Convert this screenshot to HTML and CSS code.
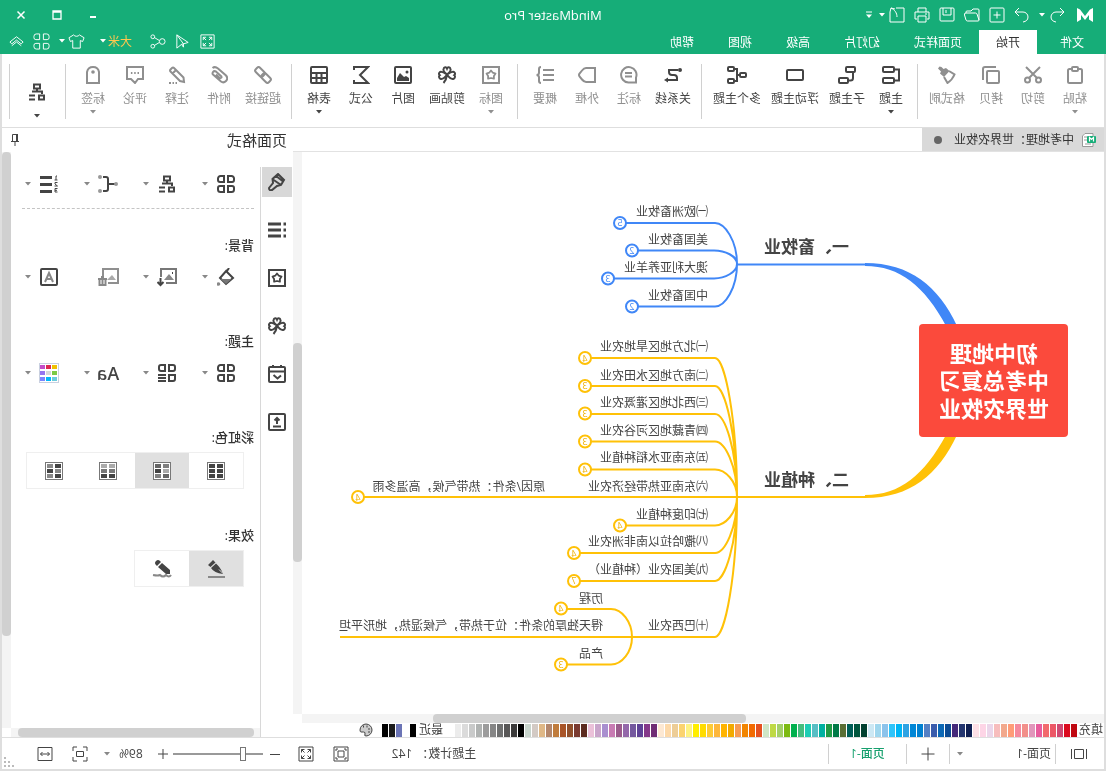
FILE: index.html
```html
<!DOCTYPE html>
<html lang="zh-CN">
<head>
<meta charset="utf-8">
<title>MindMaster Pro</title>
<link rel="stylesheet" href="styles.css">
</head>
<body>
<svg class="defs" aria-hidden="true">
  <symbol id="caret" viewBox="0 0 6 4"><path d="M0 0h6L3 3.500z" fill="currentColor" stroke="none"/></symbol>
  <symbol id="four" viewBox="0 0 18 18"><path d="M3.500 1H7v6H3a2 2 0 0 1-2-2V3.500A2.500 2.500 0 0 1 3.500 1zM11 1h3.500A2.500 2.500 0 0 1 17 3.500V5a2 2 0 0 1-2 2h-4zM3 11h4v6H3.500A2.500 2.500 0 0 1 1 14.500V13a2 2 0 0 1 2-2zM11 11h4a2 2 0 0 1 2 2v1.500a2.500 2.500 0 0 1-2.500 2.500H11z"/></symbol>
  <symbol id="layout" viewBox="0 0 18 18"><path d="M6 1.500h6v4H6zM9 5.500v3M4 11V8.500h10M2 12.500h5v4H2zM11 12.500h6M11 16.500h6"/></symbol>
  <symbol id="clover" viewBox="0 0 18 18"><path d="M9 8.500C6 6 5 4.500 5.500 3 6 1 8.300.800 9 2.500 9.700.800 12 1 12.500 3 13 4.500 12 6 9 8.500C12 6.500 14 5 16 6c1.500 1 1.200 2.600.300 3.200 1 .8 1 2.800-.6 3.600C13.500 13.500 11 11.500 9 8.500 7 11.500 4.500 13.500 2.300 12.800.700 12 .7 10 1.700 9.200.800 8.600.5 7 2 6c2-1 4 .5 7 2.500zM9 9c.5 3.500 1.500 6 3.500 8"/></symbol>
  <symbol id="star" viewBox="0 0 18 18"><path d="M1 1h16v16H1z"/><path d="M9 4.500l1.800 2.200 2.700.9-1.600 2.300v2.800L9 12l-2.900.7V9.900L4.500 7.600l2.700-.9z" stroke-width="1.800" stroke-linejoin="round"/></symbol>
  <symbol id="expand" viewBox="0 0 18 18"><path d="M2 2h14v14H2zM4.500 7.500v-3h3M4.500 4.500l3 3M10.500 4.500h3v3M13.500 4.500l-3 3M4.500 10.500v3h3M4.500 13.500l3-3M13.500 10.500v3h-3M13.500 13.500l-3-3"/></symbol>
</svg>

<div class="app">
  <header class="titlebar">
    <div class="quick">
      <svg class="logo" viewBox="0 0 18 14"><path d="M1 0l3 1.500 5 6.500 5-6.500L17 0v14l-4-2.500V7l-4 5-4-5v4.500L1 14z" fill="#fff"/></svg>
      <span class="split first"><button class="tb" aria-label="撤销"><svg viewBox="0 0 18 18"><path d="M6 2L2 6l4 4M2 6h8a5 5 0 0 1 5 5c0 3-2 4.500-5 5"/></svg></button><button class="cb" aria-label="撤销列表"><svg><use href="#caret"/></svg></button></span>
      <button class="tb" aria-label="恢复"><svg viewBox="0 0 18 18"><path d="M12 2l4 4-4 4M16 6H8a5 5 0 0 0-5 5c0 3 2 4.500 5 5"/></svg></button>
      <button class="tb" aria-label="新建"><svg viewBox="0 0 18 18"><rect x="2" y="2" width="14" height="14" rx="1"/><path d="M9 5.500v7M5.500 9h7"/></svg></button>
      <button class="tb" aria-label="打开"><svg viewBox="0 0 18 18"><path d="M2 14V4q0-1 1-1h5l2 2h4q1 0 1 1v1M2 14L4 8q.5-1 1.500-1H15q2 0 1.500 2L15 14q-.5 1-1.500 1H3q-1 0-1-1z"/></svg></button>
      <button class="tb" aria-label="保存"><svg viewBox="0 0 18 18"><rect x="2" y="2" width="14" height="13" rx="1"/><path d="M5 2v7h8V2M10 4v3"/></svg></button>
      <button class="tb" aria-label="打印"><svg viewBox="0 0 18 18"><path d="M5 6V2h8v4M4 13H2V6h14v7h-2M5 10h8v6H5zM4 8h2"/></svg></button>
      <span class="split"><button class="tb" aria-label="导出"><svg viewBox="0 0 18 18"><path d="M10 2H2v14h14V6M15 2l-4 1M15 2l1 4M15 2c-4 2-6 5-6 9"/></svg></button><button class="cb" aria-label="导出列表"><svg><use href="#caret"/></svg></button></span>
      <button class="more" aria-label="自定义"><svg viewBox="0 0 6 8"><path d="M0 1h6" /><path d="M0 3.500h6L3 7z" fill="#fff" stroke="none"/></svg></button>
    </div>
    <h1 class="title">MindMaster Pro</h1>
    <div class="win">
      <button aria-label="最小化"><svg viewBox="0 0 10 10"><path d="M2 7h6"/></svg></button>
      <button aria-label="最大化"><svg viewBox="0 0 10 10"><path d="M1 1h8v8H1zM1 2h8" stroke-width="1.300"/></svg></button>
      <button aria-label="关闭"><svg viewBox="0 0 10 10"><path d="M1.500 1.500l7 7M8.500 1.500l-7 7" stroke-width="1.500"/></svg></button>
    </div>
  </header>

  <nav class="menubar">
    <button class="menu file">文件</button>
    <button class="menu active">开始</button>
    <button class="menu">页面样式</button>
    <button class="menu">幻灯片</button>
    <button class="menu">高级</button>
    <button class="menu">视图</button>
    <button class="menu">帮助</button>
    <div class="tools">
      <button class="tb" aria-label="全屏"><svg><use href="#expand"/></svg></button>
      <button class="tb" aria-label="发送"><svg viewBox="0 0 18 18"><path d="M15 2L3 10l5 1.500L15 2v14l-5-4-2-.5M8 11.500V15l2-3"/></svg></button>
      <button class="tb" aria-label="分享"><svg viewBox="0 0 18 18"><circle cx="4" cy="9" r="3"/><circle cx="14" cy="4" r="2"/><circle cx="14" cy="14" r="2"/><path d="M7 8l5-3M7 10l5 3"/></svg></button>
      <span class="split user"><button class="name">大米</button><button class="cb" aria-label="账户"><svg><use href="#caret"/></svg></button></span>
      <span class="split"><button class="tb" aria-label="皮肤"><svg viewBox="0 0 18 18"><path d="M6 2L1 5l1.500 4L5 8v8h8V8l2.500 1L17 5l-5-3c-1 2-5 2-6 0z"/></svg></button><button class="cb" aria-label="皮肤列表"><svg><use href="#caret"/></svg></button></span>
      <button class="tb" aria-label="应用"><svg><use href="#four"/></svg></button>
      <button class="tb" aria-label="收起"><svg viewBox="0 0 18 18"><path d="M2 9.500l7-5.500 7 5.500-2 2L9 7.500l-5 4zM4 13.500l5-4 5 4"/></svg></button>
    </div>
  </nav>

  <div class="ribbon">
    <div class="group off">
      <button class="rb"><svg viewBox="0 0 18 18"><rect x="2" y="3" width="14" height="14" rx="1.500"/><rect x="6" y="1" width="6" height="4" rx="1" fill="#fff"/></svg>粘贴<svg class="dd"><use href="#caret"/></svg></button>
      <button class="rb"><svg viewBox="0 0 18 18"><circle cx="3.500" cy="14" r="2.500"/><circle cx="14.500" cy="14" r="2.500"/><path d="M5 12L16 1M13 12L2 1"/></svg>剪切</button>
      <button class="rb"><svg viewBox="0 0 18 18"><rect x="1" y="5" width="12" height="12" rx="1"/><path d="M4 1h11q2 0 2 2v11"/></svg>拷贝</button>
      <button class="rb wide3"><svg viewBox="0 0 18 18"><path d="M16.500.500l1.500 2-3 3 1 2L12 11 6.500 5 10 2l2.500 1 2-2z" fill="currentColor" stroke="none"/><path d="M7 5L1.500 8.500q2 5 7 8.500l3.500-6"/></svg>格式刷</button>
    </div>
    <div class="group">
      <button class="rb"><svg viewBox="0 0 18 18"><rect x="6" y="1" width="11" height="5" rx="1"/><rect x="6" y="12" width="11" height="5" rx="1"/><path d="M6 3.500H1v11h5"/></svg>主题<svg class="dd"><use href="#caret"/></svg></button>
      <button class="rb wide3"><svg viewBox="0 0 18 18"><rect x="1" y="1" width="9" height="5" rx="1"/><rect x="8" y="12" width="9" height="5" rx="1"/><path d="M3 6v6q0 2.500 2.500 2.500H8"/></svg>子主题</button>
      <button class="rb wide4"><svg viewBox="0 0 18 18"><rect x="1" y="4" width="16" height="10" rx="1"/></svg>浮动主题</button>
      <button class="rb wide4"><svg class="w20" viewBox="0 0 20 18"><rect x="1" y="7" width="6" height="4" rx="1"/><rect x="13" y="1" width="6" height="4" rx="1"/><rect x="13" y="13" width="6" height="4" rx="1"/><path d="M7 9h3M13 3h-3v12h3"/></svg>多个主题</button>
    </div>
    <div class="group">
      <button class="rb wide3"><svg viewBox="0 0 18 18"><path d="M4 4h9v2q0 3-3 3H8q-3 0-3 3v2h9"/><circle cx="2" cy="4" r="2" fill="currentColor" stroke="none"/><path d="M14 11.500l4 2.500-4 2.500z" fill="currentColor" stroke="none"/></svg>关系线</button>
      <button class="rb off"><svg viewBox="0 0 18 18"><path d="M2 16.500v-5A7.700 7.700 0 1 1 9.500 16.500z"/><path d="M6 7h7M6 10.500h7"/></svg>标注</button>
      <button class="rb off"><svg viewBox="0 0 18 18"><path d="M1 2h9q2 0 4 2.500l2.500 3Q17.500 9 16.500 10.500l-2.500 3Q12 16 10 16H1z"/></svg>外框</button>
      <button class="rb off"><svg viewBox="0 0 18 18"><path d="M0 4h11M0 9h11M0 14h11M13 1q2 0 2 2v3.500Q15 9 17.500 9 15 9 15 11.500V15q0 2-2 2"/></svg>概要</button>
    </div>
    <div class="group">
      <button class="rb off"><svg><use href="#star"/></svg>图标<svg class="dd"><use href="#caret"/></svg></button>
      <button class="rb wide3"><svg><use href="#clover"/></svg>剪贴画</button>
      <button class="rb"><svg viewBox="0 0 18 18"><rect x="1" y="1" width="16" height="16" rx="1"/><path d="M3 15v-3l3-2 2 1 4-4 3 5v3z" fill="currentColor" stroke="none"/><circle cx="5" cy="6" r="1.500" fill="currentColor" stroke="none"/></svg>图片</button>
      <button class="rb"><svg viewBox="0 0 18 18"><path d="M16 4V1H2l8 8-8 8h14v-3"/></svg>公式</button>
      <button class="rb"><svg viewBox="0 0 18 18"><rect x="1" y="1" width="16" height="16" rx="1"/><path d="M1 7h16M1 12h16M6.500 7v10M11.500 7v10"/></svg>表格<svg class="dd"><use href="#caret"/></svg></button>
    </div>
    <div class="group off">
      <button class="rb wide3"><svg viewBox="0 0 18 18"><rect x="-5" y="-3" width="10" height="6" rx="2" transform="translate(12 6) rotate(-45)"/><rect x="-5" y="-3" width="10" height="6" rx="2" transform="translate(6 12) rotate(-45)"/></svg>超链接</button>
      <button class="rb"><svg viewBox="0 0 18 18"><path d="M6 11l6-5.500q2-1 3 .5t0 2.500l-8 7Q4.500 17.500 2 15t0-5.500l8-7Q13 0 15.500 2M6 11q1.500 2 3 .5l3-3"/></svg>附件</button>
      <button class="rb"><svg viewBox="0 0 18 18"><path d="M12 2q1-1 2 0l1.500 1.500q1 1 0 2L6 15l-4 1 .5-4.500zM10 4l3.500 3.500M9 17h1.500M12 17h1.500M15 17h2"/></svg>注释</button>
      <button class="rb"><svg viewBox="0 0 18 18"><path d="M1 1h16v12h-4l-4 4-3-4H1zM5 7h1.500M8.300 7h1.500M11.600 7h1.500"/></svg>评论</button>
      <button class="rb"><svg viewBox="0 0 18 18"><path d="M3 17V6Q4 1 9 1t6 5v11z"/><circle cx="9" cy="6" r="1.800" fill="currentColor" stroke="none"/></svg>标签<svg class="dd"><use href="#caret"/></svg></button>
    </div>
    <div class="group last">
      <button class="rb solo wide3" aria-label="布局"><svg><use href="#layout"/></svg><svg class="dd"><use href="#caret"/></svg></button>
    </div>
  </div>

  <main class="work">
    <section class="editor">
      <div class="doctabs">
        <button class="doc"><svg class="docicon" viewBox="0 0 14 14"><path d="M3 .500h8l2.500 2.500v10.500H3z" fill="#fff" stroke="#999"/><path d="M9 4h3M9 7h3M5 11h6" stroke="#999"/><rect x="0" y="3" width="9" height="7" rx="1" fill="#16ad78" stroke="none"/><path d="M2.500 8.500v-4l2 2 2-2v4" fill="none" stroke="#fff" stroke-width="1.200"/></svg>中考地理：世界农牧业<i class="dot"></i></button>
      </div>
      <div class="stage">
        <svg class="map">
          <g transform="translate(-2 -152)">
            <g class="fillb"><path d="M149 326C168 286 196 263 241 263V266C206 266 182 286 160 326z"/></g>
            <g class="filly"><path d="M149 435C168 475 196 498 241 498V495C206 495 182 475 160 435z"/></g>
            <rect class="root" x="38" y="324" width="149" height="113" rx="4"/>
            <text class="roottext" x="112" y="362">初中地理</text>
            <text class="roottext" x="112" y="389">中考总复习</text>
            <text class="roottext" x="112" y="417">世界农牧业</text>
            <g class="blue">
              <path d="M240 264.500H369M369 264C369 241 381 223 391 223H480M369 264C369 256 381 250.500 392 250.500H468M369 264C369 272 381 278.500 392 278.500H492M369 264C369 288 381 306.500 391 306.500H468"/>
              <circle cx="486" cy="223" r="6"/><circle cx="474" cy="250.500" r="6"/><circle cx="498" cy="278.500" r="6"/><circle cx="474" cy="306.500" r="6"/>
              <text x="486" y="226">5</text><text x="474" y="254">2</text><text x="498" y="282">3</text><text x="474" y="310">2</text>
            </g>
            <g class="yellow">
              <path d="M240 497H742M369 497C369 420 381 358 391 358H515M369 497C369 435 381 386 391 386H515M369 497C369 450 381 414 391 414H515M369 497C369 466 381 441.500 391 441.500H515M369 497C369 481 381 469.500 391 469.500H515M369 497C369 513 381 525.500 391 525.500H480M369 497C369 528 381 553 391 553H526M369 497C369 543 381 581 391 581H526M369 497C369 575 381 637 391 637H766M474 637C474 622 484 609 495 609H539M474 637C474 652 484 664.500 495 664.500H539"/>
              <circle cx="521" cy="358" r="6"/><circle cx="521" cy="386" r="6"/><circle cx="521" cy="413.500" r="6"/><circle cx="521" cy="441.500" r="6"/><circle cx="521" cy="469.500" r="6"/><circle cx="748" cy="497" r="6"/><circle cx="486" cy="525.500" r="6"/><circle cx="532" cy="553" r="6"/><circle cx="532" cy="581" r="6"/><circle cx="545" cy="608.500" r="6"/><circle cx="545" cy="664.500" r="6"/>
              <text x="521" y="362">4</text><text x="521" y="389">3</text><text x="521" y="417">3</text><text x="521" y="445">3</text><text x="521" y="473">4</text><text x="748" y="501">4</text><text x="486" y="529">4</text><text x="532" y="557">4</text><text x="532" y="584">7</text><text x="545" y="612">4</text><text x="545" y="668">3</text>
            </g>
            <g class="main"><text x="257" y="253">一、畜牧业</text><text x="257" y="486">二、种植业</text></g>
            <g class="leaf">
              <text x="398" y="216">㈠欧洲畜牧业</text><text x="398" y="244">美国畜牧业</text><text x="398" y="272">澳大利亚养羊业</text><text x="398" y="300">中国畜牧业</text>
              <text x="398" y="351">㈠北方地区旱地农业</text><text x="398" y="380">㈡南方地区水田农业</text><text x="398" y="407">㈢西北地区灌溉农业</text><text x="398" y="435">㈣青藏地区河谷农业</text><text x="398" y="462">㈤东南亚水稻种植业</text><text x="398" y="491">㈥东南亚热带经济农业</text><text x="561" y="491">原因/条件：热带气候，高温多雨</text><text x="398" y="519">㈦印度种植业</text><text x="398" y="546">㈧撒哈拉以南非洲农业</text><text x="398" y="574">㈨美国农业（种植业）</text><text x="398" y="630">㈩巴西农业</text><text x="503" y="603">历程</text><text x="503" y="630">得天独厚的条件：位于热带，气候湿热，地形平坦</text><text x="503" y="658">产品</text>
            </g>
          </g>
        </svg>
        <div class="vbar"><span class="thumb canvas-v"></span></div>
        <div class="hbar"><span class="thumb canvas-h"></span></div>
      </div>
      <div class="colors">
        <span>填充</span><div class="swatches" id="palette"></div>
        <span class="recent">最近</span><div class="swatches" id="recent"></div>
        <button class="pal" aria-label="更多颜色"><svg viewBox="0 0 14 14"><path d="M7 1a6 6 0 1 0 0 12q2 0 1-2-.5-2 1.500-2H12q1 0 1-2a6 6 0 0 0-6-6z" fill="#ccc"/><path d="M3.500 6h1M5.500 3.500h1M9 3.500h1M3.500 9h1" stroke-width="1.800"/></svg></button>
      </div>
    </section>

    <aside class="panel">
      <div class="panelhead"><h2>页面格式</h2><button aria-label="固定"><svg viewBox="0 0 12 14"><path d="M3.500 1.500h5v7h-5zM2 8.500h8M6 9v4"/><path d="M3 1h2v7H3z" fill="currentColor" stroke="none"/></svg></button></div>
      <div class="panelbody">
        <div class="side">
          <button class="active" aria-label="页面格式"><svg viewBox="0 0 18 18"><path d="M8 1L2 7l3 5 4 1 5 4q3 1 3-2l-4-5 .5-4zM3.500 8l7-5.500M5 12l8-5.500"/></svg></button>
          <button aria-label="大纲"><svg viewBox="0 0 18 18"><path d="M0 3h2.500M0 9h2.500M0 15h2.500M5 3h13M5 9h13M5 15h13" stroke-width="3"/></svg></button>
          <button aria-label="图标"><svg><use href="#star"/></svg></button>
          <button aria-label="剪贴画"><svg><use href="#clover"/></svg></button>
          <button aria-label="任务"><svg viewBox="0 0 18 18"><rect x="1" y="2" width="16" height="15" rx="1"/><path d="M1 6.500h16M5 0v3M13 0v3M5 10.500l3.500 3 4-3.500"/></svg></button>
          <button aria-label="历史"><svg viewBox="0 0 18 18"><rect x="1" y="1" width="16" height="16" rx="1"/><path d="M9 5v6M6.500 7.500L9 5l2.500 2.500M5 13.500h8"/></svg></button>
        </div>
        <div class="props">
          <div class="row top">
            <button aria-label="主题样式"><svg><use href="#four"/></svg><svg class="dd"><use href="#caret"/></svg></button>
            <button aria-label="布局"><svg><use href="#layout"/></svg><svg class="dd"><use href="#caret"/></svg></button>
            <button aria-label="连接线"><svg class="w20" viewBox="0 0 20 18"><path d="M2 9h7M15 2h-3q-2 0-2 2v10q0 2 2 2h3"/><g fill="#999" stroke="none"><circle cx="2" cy="9" r="2"/><circle cx="18" cy="2" r="2"/><circle cx="18" cy="16" r="2"/></g></svg><svg class="dd"><use href="#caret"/></svg></button>
            <button aria-label="编号"><svg viewBox="0 0 18 18"><path d="M6 2.500h12M6 9.500h12M6 16.500h12" stroke-width="3"/><path d="M1 1h1v4M.500 5h3M.500 7.500h2.500v1.500l-2.500 2h3M.500 13.500h2.500v3.500H.500M1 15.300h2" stroke-width="1"/></svg><svg class="dd"><use href="#caret"/></svg></button>
          </div>
          <h3>背景:</h3>
          <div class="row">
            <button aria-label="填充"><svg viewBox="0 0 18 18"><path d="M8 2l7 8-6 6-7-6 7-7M6 0l2 3"/><path d="M3.500 11h11L9 16z" fill="#777" stroke="none"/><circle cx="16.500" cy="16" r="1.800" fill="#888" stroke="none"/></svg><svg class="dd"><use href="#caret"/></svg></button>
            <button aria-label="背景图片"><svg class="w20" viewBox="0 0 20 18"><path d="M16 9V1H1v14h10" stroke="#777"/><path d="M3 12l5-6 5 6z" fill="#888" stroke="none"/><path d="M16.500 10v7M13.500 14l3 3 3-3M4 5h1"/></svg><svg class="dd"><use href="#caret"/></svg></button>
            <button class="off" aria-label="移除背景"><svg class="w22" viewBox="0 0 22 18"><path d="M16 8V1H1v14h10"/><path d="M3 12l4-5 5 5z" fill="#aaa" stroke="none"/><path d="M12 11h9M15 9h3M13.500 12v5h6v-5M16.500 12v5" stroke="#888"/></svg></button>
            <button aria-label="水印"><svg viewBox="0 0 18 18"><rect x="1" y="1" width="16" height="16" rx="1"/><path d="M5 14l4-9 4 9M6.500 11h5" stroke="#888"/></svg><svg class="dd"><use href="#caret"/></svg></button>
          </div>
          <h3>主题:</h3>
          <div class="row">
            <button aria-label="主题"><svg><use href="#four"/></svg><svg class="dd"><use href="#caret"/></svg></button>
            <button aria-label="主题列表"><svg viewBox="0 0 18 18"><path d="M3 1h4v6H3a2 2 0 0 1-2-2V3a2 2 0 0 1 2-2zM11 1h4a2 2 0 0 1 2 2v2a2 2 0 0 1-2 2h-4zM1 11h6v6H3a2 2 0 0 1-2-2zM10 11h8M10 14h8M10 17h8"/></svg><svg class="dd"><use href="#caret"/></svg></button>
            <button class="aa" aria-label="主题字体"><span>Aa</span><svg class="dd"><use href="#caret"/></svg></button>
            <button aria-label="主题颜色"><svg class="w20" viewBox="0 0 20 20"><g stroke="none"><path d="M0 0h20v20H0z" fill="#c9d0e0"/><path d="M1 1h18v18H1z" fill="#fff"/><path d="M2 2h5v4H2z" fill="#f0c000"/><path d="M8 2h5v4H8z" fill="#dd2850"/><path d="M14 2h5v4h-5z" fill="#c44cc8"/><path d="M2 8h5v4H2z" fill="#7ac943"/><path d="M8 8h5v4H8z" fill="#d8d8d8"/><path d="M14 8h5v4h-5z" fill="#9575f0"/><path d="M2 14h5v4H2z" fill="#6accdc"/><path d="M8 14h5v4H8z" fill="#00b8f8"/><path d="M14 14h5v4h-5z" fill="#7b86ff"/></g></svg><svg class="dd"><use href="#caret"/></svg></button>
          </div>
          <h3>彩虹色:</h3>
          <div class="seg">
            <button aria-label="单色"><svg class="rain" viewBox="0 0 18 18"><rect x=".5" y=".5" width="17" height="17"/><path d="M2 2h6v4H2zM10 2h6v4h-6zM2 7h6v4H2zM10 7h6v4h-6zM2 12h6v4H2zM10 12h6v4h-6z" fill="#444"/></svg></button>
            <button class="on" aria-label="彩虹色"><svg class="rain" viewBox="0 0 18 18"><rect x=".5" y=".5" width="17" height="17"/><path d="M10 7h6v4h-6z" fill="#444"/><path d="M10 2h6v4h-6zM2 12h6v4H2z" fill="#666"/><path d="M2 2h6v4H2zM10 12h6v4h-6z" fill="#808080"/><path d="M2 7h6v4H2z" fill="#aaa"/></svg></button>
            <button aria-label="渐变"><svg class="rain" viewBox="0 0 18 18"><rect x=".5" y=".5" width="17" height="17"/><path d="M2 2h6v4H2zM10 2h6v4h-6z" fill="#aaa"/><path d="M2 7h6v4H2zM10 7h6v4h-6z" fill="#777"/><path d="M2 12h6v4H2zM10 12h6v4h-6z" fill="#444"/></svg></button>
            <button aria-label="交替"><svg class="rain" viewBox="0 0 18 18"><rect x=".5" y=".5" width="17" height="17"/><path d="M2 2h6v4H2zM10 7h6v4h-6zM2 12h6v4H2z" fill="#444"/><path d="M10 2h6v4h-6zM2 7h6v4H2zM10 12h6v4h-6z" fill="#888"/></svg></button>
          </div>
          <h3>效果:</h3>
          <div class="seg">
            <button class="on" aria-label="标准"><svg viewBox="0 0 18 18"><g fill="#444" stroke="none"><path d="M12 0l5 5-2.500 2L9.500 2.500zM9 3.500l5 4.500q-3 5-12 6 2-6 7-10.500z"/></g><path d="M2 13.500l4-4" stroke="#ddd" stroke-width="1"/><path d="M0 17h17" stroke="#888"/></svg></button>
            <button aria-label="手绘"><svg class="w20" viewBox="0 0 20 18"><g fill="#444" stroke="none"><path d="M12 1q2-2 4 0t0 4l-1 1-4-4zM10 3l4 4-8 7H2v-4z"/></g><path d="M1 15q2 3 5 0 3 3 6 0 2 1 7 0" stroke="#888"/></svg></button>
          </div>
        </div>
        <div class="vbar side-v"><span class="thumb"></span></div>
        <div class="hbar side-h"><span class="thumb"></span></div>
      </div>
    </aside>
  </main>

  <footer class="status">
    <button class="sb" aria-label="大纲"><svg viewBox="0 0 18 18"><path d="M1.500 4v10M16.500 4v10M4.500 4.500h9v9h-9z"/></svg></button>
    <div class="pagesel"><select aria-label="页面"><option>页面-1</option></select><svg class="dd"><use href="#caret"/></svg></div>
    <button class="sb add" aria-label="添加页面"><svg viewBox="0 0 18 18"><path d="M9 2.500v13M2.500 9h13"/></svg></button>
    <button class="page">页面-1</button>
    <div class="right">
      <span class="count"><span>主题计数：</span><span>142</span></span>
      <button class="sb" aria-label="适应"><svg viewBox="0 0 18 18"><path d="M2 2h14v14H2zM6 6h6v6H6zM4 6V4h2M12 4h2v2M4 12v2h2M12 14h2v-2"/></svg></button>
      <button class="sb full" aria-label="全屏"><svg><use href="#expand"/></svg></button>
      <button class="sb" aria-label="缩小"><svg viewBox="0 0 18 18"><path d="M4 9.500h10"/></svg></button>
      <input type="range" min="0" max="100" value="20" aria-label="缩放">
      <button class="sb" aria-label="放大"><svg viewBox="0 0 18 18"><path d="M9 4v10M4 9h10"/></svg></button>
      <button class="zoom">89%<svg class="dd"><use href="#caret"/></svg></button>
      <button class="sb" aria-label="居中"><svg viewBox="0 0 18 18"><path d="M2 6V2h4M12 2h4v4M16 12v4h-4M6 16H2v-4M5.500 6.500h7v5h-7z"/></svg></button>
      <button class="sb fitw" aria-label="适应宽度"><svg viewBox="0 0 18 18"><path d="M2 2.500h14v13H2zM4.500 9h9M6.500 7l-2 2 2 2M11.500 7l2 2-2 2"/></svg></button>
      <svg class="grip" viewBox="0 0 10 10"><path d="M8 0h2v2H8zM8 4h2v2H8zM4 4h2v2H4zM8 8h2v2H8zM4 8h2v2H4zM0 8h2v2H0z" fill="#bbb"/></svg>
    </div>
  </footer>
</div>
<script src="app.js"></script>
</body>
</html>
```

FILE: styles.css
```css
* { box-sizing: border-box; }

body {
  margin: 0;
  overflow: hidden;
  background: #fff;
  color: #444;
  font: 12px/18px "Open Sans", "Noto Sans CJK SC", sans-serif;
}

button, select {
  margin: 0;
  padding: 0;
  border: 0;
  background: none;
  color: inherit;
  font: inherit;
  white-space: nowrap;
}

h1, h2, h3 { margin: 0; font-weight: 400; }

svg { fill: none; stroke: currentColor; display: block; flex: none; }
.defs { position: absolute; width: 0; height: 0; }

/* The whole window is shown as a mirror image. */
.app {
  display: flex;
  flex-direction: column;
  height: 100vh;
  transform: scaleX(-1);
}

/* title bar */
.titlebar {
  display: grid;
  grid-template-columns: 1fr auto 1fr;
  align-items: center;
  height: 30px;
  background: #16ad78;
  color: #fff;
}
.quick { display: flex; align-items: center; gap: 5px; padding-left: 12px; }
.logo { width: 18px; height: 14px; stroke: none; }
.split { display: flex; align-items: center; }
.split.first { margin-left: 4px; }
.tb { display: grid; place-items: center; width: 20px; height: 20px; }
.tb svg { width: 18px; height: 18px; }
.cb { display: grid; place-items: center; width: 10px; height: 20px; }
.cb svg { width: 6px; height: 4px; }
.more svg { width: 6px; height: 8px; }
.title { font-size: 13px; }
.win { display: flex; justify-content: flex-end; padding-right: 3px; }
.win button { display: grid; place-items: center; width: 36px; height: 28px; }
.win svg { width: 10px; height: 10px; stroke-width: 2; }

/* menu */
.menubar {
  display: flex;
  align-items: stretch;
  height: 24px;
  padding: 0 7px 0 5px;
  background: #16ad78;
  color: #fff;
}
.menu { padding: 2px 17px 0; }
.menu.file { margin-right: 6px; }
.menu.active { background: #fff; color: #333; }
.tools { display: flex; align-items: center; gap: 5px; margin-left: auto; padding-bottom: 2px; }
.tools .tb svg { width: 17px; height: 17px; }
.user { margin: 0 6px 0 10px; }
.name { padding-top: 2px; color: #ffc74f; }

/* ribbon */
.ribbon {
  display: flex;
  height: 74px;
  border: 2px solid #dedede;
  border-width: 0 2px 1px;
  padding: 10px 0 8px 3px;
}
.group {
  display: flex;
  padding: 0 6px 0 5px;
  border-right: 1px solid #d0d0d0;
}
.group.last { padding-right: 4px; }
.rb {
  display: flex;
  flex-direction: column;
  align-items: center;
  width: 42px;
  padding-top: 2px;
}
.rb.wide3 { width: 46px; }
.rb.wide4 { width: 58px; }
.rb svg { width: 18px; height: 18px; stroke-width: 2; margin-bottom: 6px; }
.rb .w20 { width: 20px; }
.rb .dd { width: 6px; height: 4px; margin: 2px 0 0; }
.rb.solo { padding-top: 19px; }
.rb.solo .dd { margin-top: 7px; }
.off { color: #8f8f8f; }

/* work area */
.work {
  display: grid;
  grid-template-columns: minmax(0, 1fr) 291px;
  flex: 1;
  min-height: 0;
  border: 2px solid #dedede;
  border-width: 0 2px;
}
.editor { display: flex; flex-direction: column; min-height: 0; }
.doctabs { display: flex; height: 24px; border-bottom: 1px solid #e2e2e2; }
.doc {
  display: flex;
  align-items: center;
  width: 182px;
  padding-left: 8px;
  background: #d9d9d9;
  color: #333;
}
.docicon { width: 14px; height: 14px; margin-right: 8px; }
.dot { width: 8px; height: 8px; margin-left: 12px; border-radius: 4px; background: #666; }
.stage {
  display: grid;
  grid-template: minmax(0, 1fr) 9px / minmax(0, 1fr) 9px;
  flex: 1;
  min-height: 0;
}
.map { width: 100%; height: 100%; }
.vbar, .hbar { display: flex; background: #f4f4f4; }
.vbar { flex-direction: column; }
.thumb { border-radius: 4px; background: #d0d0d0; }
.canvas-v { height: 39%; margin-top: 191px; }
.canvas-h { width: 39%; margin-left: 358px; }

.fillb { fill: #4087f7; stroke: none; }
.filly { fill: #ffc107; stroke: none; }
.root { fill: #fb4a3c; stroke: none; }
.map text { stroke: none; }
.roottext { fill: #fff; font-size: 22px; font-weight: 700; text-anchor: middle; }
.blue { stroke: #4087f7; stroke-width: 2; }
.yellow { stroke: #ffc107; stroke-width: 2; }
.map circle { fill: #fff; }
.blue text, .yellow text { font-size: 9px; text-anchor: middle; }
.blue text { fill: #4087f7; }
.yellow text { fill: #f0b000; }
.main { fill: #444; font-size: 17px; font-weight: 700; }
.leaf { fill: #444; font-size: 12px; }

.colors { display: flex; align-items: center; height: 14px; padding-left: 1px; }
.swatches { display: flex; gap: 1px; margin-left: 2px; }
.swatches i { width: 6px; height: 13px; }
.recent { margin: 0 1px 0 12px; }
.pal { margin-left: 9px; }
.pal svg { width: 14px; height: 14px; }

/* right panel */
.panel { display: flex; flex-direction: column; min-height: 0; }
.panelhead { display: flex; justify-content: space-between; align-items: center; height: 24px; padding: 0 7px 0 6px; }
.panelhead h2 { font-size: 15px; color: #333; }
.panelhead svg { width: 12px; height: 14px; }
.panelbody {
  display: grid;
  grid-template: minmax(0, 1fr) 9px / 33px minmax(0, 1fr) 9px;
  flex: 1;
  min-height: 0;
}
.side {
  grid-row: 1 / 3;
  display: flex;
  flex-direction: column;
  gap: 18px;
  margin-top: 15px;
  padding-left: 1px;
  border-right: 1px solid #d8d8d8;
}
.side button { display: grid; place-items: center; width: 30px; height: 30px; }
.side .active { background: #d8d8d8; }
.side svg { width: 18px; height: 18px; stroke-width: 2; }
.side-v .thumb { height: 84%; }
.side-h { padding: 0 7px 0 6px; }
.side-h .thumb { flex: 1; }

.props { padding: 17px 11px 0 6px; overflow: hidden; }
.row { display: flex; height: 30px; padding-left: 16px; margin-bottom: 39px; }
.row.top { height: 40px; padding-bottom: 10px; margin-bottom: 26px; border-bottom: 1px dashed #c4c4c4; }
.row button { display: grid; grid-template-columns: 24px 18px; place-items: center; flex: none; width: 59px; justify-content: start; }
.row button:last-child { width: 42px; }
.row svg { width: 18px; height: 18px; stroke-width: 2; }
.row .w20 { width: 20px; height: 20px; }
.row .w22 { width: 22px; }
.row .dd, .status .dd { width: 6px; height: 4px; color: #888; }
.aa span { font: 600 18px/24px "Open Sans", sans-serif; }
h3 { height: 27px; font-size: 13px; line-height: 20px; font-weight: 500; color: #333; }
.seg { display: inline-flex; height: 37px; margin: -2px 0 36px 10px; border: 1px solid #efefef; vertical-align: top; }
.seg button { display: grid; place-items: center; width: 54px; }
.seg svg { width: 18px; height: 18px; stroke-width: 2; }
.seg .w20 { width: 20px; }
.seg .on { background: #e0e0e0; }
.seg .rain { stroke: none; }
.rain rect { stroke: #777; stroke-width: 1; fill: #fff; }

/* status bar */
.status {
  display: flex;
  align-items: center;
  height: 34px;
  border: 2px solid #dedede;
  border-top-width: 1px;
  padding-left: 15px;
}
.sb { display: grid; place-items: center; width: 20px; height: 20px; }
.sb svg { width: 18px; height: 18px; }
.pagesel {
  display: flex;
  align-items: center;
  width: 107px;
  height: 20px;
  margin-left: 13px;
  padding: 0 7px 0 4px;
  border: 1px solid #d0d0d0;
  border-width: 0 1px;
}
.pagesel select { flex: 1; appearance: none; }
.sb.add { width: 42px; }
.page {
  width: 79px;
  height: 20px;
  border: 1px solid #d0d0d0;
  border-width: 0 1px;
  color: #16a06e;
  font-weight: 500;
}
.right { display: flex; align-items: center; align-self: stretch; margin-left: auto; }
.count { display: flex; gap: 4px; margin-right: 41px; }
.full { margin: 0 11px 0 15px; }
.zoom { display: flex; align-items: center; gap: 9px; margin: 0 14px 0 10px; }
.fitw { margin-left: 15px; }
.grip { width: 10px; height: 10px; align-self: flex-end; margin: 0 2px 2px 21px; stroke: none; }

input[type="range"] { width: 90px; height: 14px; margin: 0 0 0 2px; appearance: none; background: none; }
input[type="range"]::-webkit-slider-runnable-track { height: 2px; background: #999; }
input[type="range"]::-webkit-slider-thumb {
  appearance: none;
  width: 6px;
  height: 14px;
  margin-top: -6px;
  border: 1px solid #777;
  background: #fff;
}
```

FILE: app.js
```js
const palette = `bf0811 db0a1e cf4a73 ec5766 f26a6e e85d9e e196bb f28f8a f58a9e ff9c78 f2a88c f7bdbd ebd6ea fdd5e6 fde0e6
0f1f52 23356f 45297a 0b4a93 0c68b5 3a5cac 5480c4 0080d0 0086d6 2ea3e3 00b5f5 2fc4fa 8cc3eb a0d7ee cce8f4
00402f 00553d 005e57 5a6e34 007a47 209a45 00b0a0 57bec4 1dcdb4 44bd7e 00b04e 7dba12 a4d069 bfd945 cfe6c6
e5511f f26a00 f28500 f79b52 f2aa00 ffb400 fdb73b fdcb37 ffdc00 ffee00 fdf283 fbd36f edcd96 fdd9a9 fde8d2
6f2c74 85388a 5f4296 74589e 9468aa 9b5b8c c87bb3 a98fcf c9a5cb ebc1d9
5c2b1f 7a3a30 91502c a95528 c07c3d b4876c dfb887 d3cac4 c8d4cc
000000 3b3a3a 585757 6f7070 868686 9c9c9c b0b3b2 c9caca dbdbdb ececec`.split(/\s+/);
const recent = "000000 ffffff 6b74b5 1a1a1a 000000".split(" ");

function fill(id, colors) {
  const box = document.getElementById(id);
  for (const color of colors) {
    const chip = document.createElement("i");
    chip.style.background = "#" + color;
    box.append(chip);
  }
}

fill("palette", palette);
fill("recent", recent);
```
